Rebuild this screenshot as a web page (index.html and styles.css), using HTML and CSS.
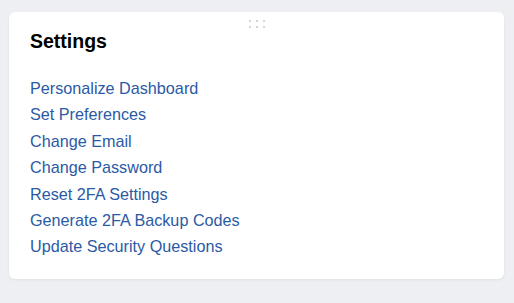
FILE: index.html
```html
<!DOCTYPE html>
<html lang="en">
<head>
    <meta charset="UTF-8">
    <title>Settings</title>
    <link rel="stylesheet" href="styles.css">
</head>
<body>

    <!-- Settings widget -->
    <div class="card">
        <div class="handle">
            <span></span><span></span><span></span>
            <span></span><span></span><span></span>
        </div>
        <h2>Settings</h2>
        <ul class="links">
            <li><a href="#">Personalize Dashboard</a></li>
            <li><a href="#">Set Preferences</a></li>
            <li><a href="#">Change Email</a></li>
            <li><a href="#">Change Password</a></li>
            <li><a href="#">Reset 2FA Settings</a></li>
            <li><a href="#">Generate 2FA Backup Codes</a></li>
            <li><a href="#">Update Security Questions</a></li>
        </ul>
    </div>

</body>
</html>
```

FILE: styles.css
```css
* {
    margin: 0;
    padding: 0;
    box-sizing: border-box;
}
body {
    font-family: Arial, 'Liberation Sans', sans-serif;
    background: #eeeff3;
    padding: 12px 10px 24px 9px;
}
.card {
    position: relative;
    background: #fff;
    border-radius: 6px;
    box-shadow: 0 1px 3px rgba(0, 0, 0, 0.06);
    padding: 18px 21px;
    height: 267px;
}
.handle {
    position: absolute;
    top: 8px;
    left: 50%;
    transform: translateX(-50%);
    display: grid;
    grid-template-columns: repeat(3, 2px);
    gap: 4px 5px;
}
.handle span {
    width: 2px;
    height: 2px;
    background: #d4d5d9;
}
h2 {
    font-size: 19.5px;
    font-weight: bold;
    color: #000;
    line-height: 22px;
    margin-bottom: 23px;
}
.links {
    list-style: none;
}
.links li {
    font-size: 16.2px;
    line-height: 26.4px;
}
.links a {
    color: #2b5aa5;
    text-decoration: none;
}
```
